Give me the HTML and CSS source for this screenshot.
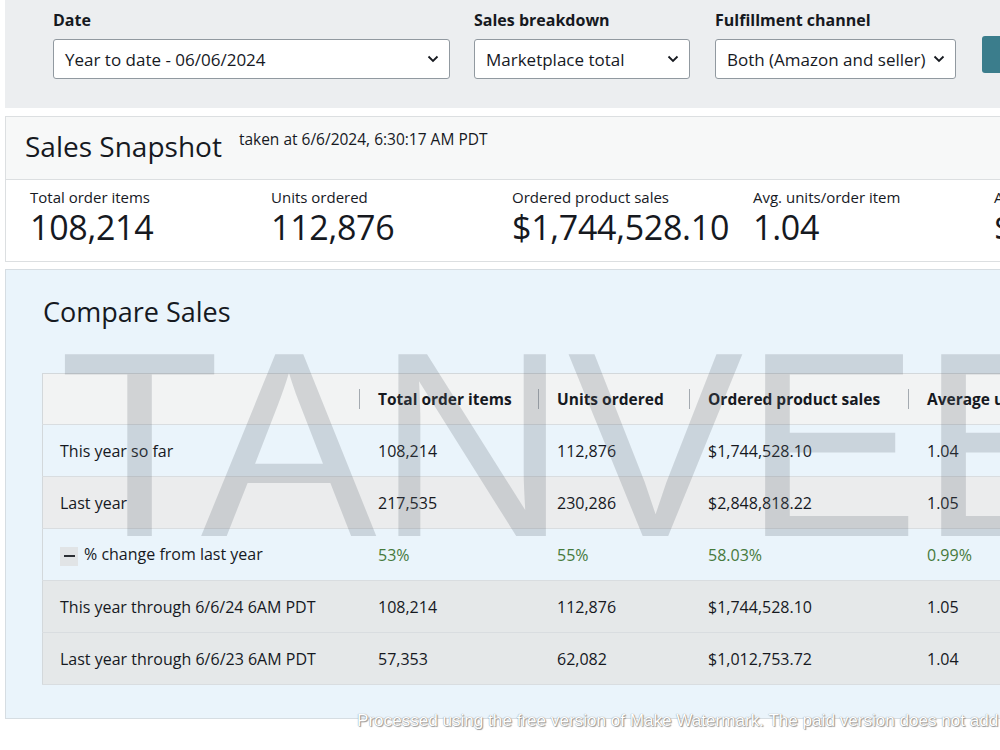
FILE: index.html
```html
<!DOCTYPE html>
<html lang="en">
<head>
    <meta charset="UTF-8">
    <meta name="viewport" content="width=device-width, initial-scale=1.0">
    <title>Sales Dashboard</title>
    <link rel="stylesheet" href="styles.css">
</head>
<body>

    <div class="filters">
        <div class="field field-date">
            <label>Date</label>
            <div class="select">
                <span>Year to date - 06/06/2024</span>
                <svg class="chevron" width="12" height="8" viewBox="0 0 12 8"><path d="M1.5 1.5 6 6l4.5-4.5" fill="none" stroke="#16191f" stroke-width="1.8"/></svg>
            </div>
        </div>
        <div class="field field-breakdown">
            <label>Sales breakdown</label>
            <div class="select">
                <span>Marketplace total</span>
                <svg class="chevron" width="12" height="8" viewBox="0 0 12 8"><path d="M1.5 1.5 6 6l4.5-4.5" fill="none" stroke="#16191f" stroke-width="1.8"/></svg>
            </div>
        </div>
        <div class="field field-channel">
            <label>Fulfillment channel</label>
            <div class="select">
                <span>Both (Amazon and seller)</span>
                <svg class="chevron" width="12" height="8" viewBox="0 0 12 8"><path d="M1.5 1.5 6 6l4.5-4.5" fill="none" stroke="#16191f" stroke-width="1.8"/></svg>
            </div>
        </div>
        <button class="apply"></button>
    </div>

    <div class="snapshot">
        <div class="snapshot-head">
            <h2>Sales Snapshot</h2>
            <span class="taken">taken at 6/6/2024, 6:30:17 AM PDT</span>
        </div>
        <div class="metrics">
            <div class="metric">
                <div class="metric-label">Total order items</div>
                <div class="metric-value">108,214</div>
            </div>
            <div class="metric">
                <div class="metric-label">Units ordered</div>
                <div class="metric-value">112,876</div>
            </div>
            <div class="metric">
                <div class="metric-label">Ordered product sales</div>
                <div class="metric-value">$1,744,528.10</div>
            </div>
            <div class="metric">
                <div class="metric-label">Avg. units/order item</div>
                <div class="metric-value">1.04</div>
            </div>
            <div class="metric">
                <div class="metric-label">Avg. sales/order item</div>
                <div class="metric-value">$16.12</div>
            </div>
        </div>
    </div>

    <div class="compare">
        <h2>Compare Sales</h2>
        <table class="compare-table">
            <thead>
                <tr>
                    <th class="col-name"></th>
                    <th class="col-items">Total order items</th>
                    <th class="col-units">Units ordered</th>
                    <th class="col-sales">Ordered product sales</th>
                    <th class="col-avg">Average units/order item</th>
                </tr>
            </thead>
            <tbody>
                <tr class="row-blue">
                    <td>This year so far</td>
                    <td>108,214</td>
                    <td>112,876</td>
                    <td>$1,744,528.10</td>
                    <td>1.04</td>
                </tr>
                <tr class="row-gray">
                    <td>Last year</td>
                    <td>217,535</td>
                    <td>230,286</td>
                    <td>$2,848,818.22</td>
                    <td>1.05</td>
                </tr>
                <tr class="row-blue change">
                    <td><span class="toggle"></span>% change from last year</td>
                    <td>53%</td>
                    <td>55%</td>
                    <td>58.03%</td>
                    <td>0.99%</td>
                </tr>
                <tr class="row-dark">
                    <td>This year through 6/6/24 6AM PDT</td>
                    <td>108,214</td>
                    <td>112,876</td>
                    <td>$1,744,528.10</td>
                    <td>1.05</td>
                </tr>
                <tr class="row-dark">
                    <td>Last year through 6/6/23 6AM PDT</td>
                    <td>57,353</td>
                    <td>62,082</td>
                    <td>$1,012,753.72</td>
                    <td>1.04</td>
                </tr>
            </tbody>
        </table>
    </div>

    <div class="stamp">TANVEER</div>
    <div class="stamp-note">Processed using the free version of Make Watermark. The paid version does not add watermarks.</div>

</body>
</html>
```

FILE: styles.css
```css
body {
    font-family: "Open Sans", Arial, sans-serif;
    color: #16191f;
    background-color: #fff;
    margin: 0;
    width: 1000px;
    height: 750px;
    overflow: hidden;
    position: relative;
}
h2 {
    margin: 0;
    font-weight: 400;
}

/* filter bar */
.filters {
    display: flex;
    margin-left: 5px;
    height: 108px;
    box-sizing: border-box;
    padding: 10px 0 0 48px;
    background-color: #eceef0;
}
.field {
    display: flex;
    flex-direction: column;
    flex: none;
    margin-right: 24px;
}
.field label {
    font-size: 16px;
    font-weight: 700;
    line-height: 20px;
    margin-bottom: 9px;
}
.field-date { width: 397px; }
.field-breakdown { width: 216px; margin-right: 25px; }
.field-channel { width: 241px; margin-right: 26px; }
.select {
    display: flex;
    align-items: center;
    justify-content: space-between;
    height: 40px;
    box-sizing: border-box;
    padding: 0 10px 0 11px;
    background-color: #fff;
    border: 1px solid #9199a0;
    border-radius: 3px;
    font-size: 17px;
    white-space: nowrap;
}
.chevron {
    flex: none;
}
.apply {
    flex: none;
    margin-top: 26px;
    width: 60px;
    height: 37px;
    border: none;
    border-radius: 3px;
    background-color: #3b7d8c;
}

/* sales snapshot */
.snapshot {
    margin: 8px 0 0 5px;
    width: 1100px;
    border: 1px solid #dcdfe1;
}
.snapshot-head {
    display: flex;
    align-items: flex-start;
    height: 63px;
    box-sizing: border-box;
    padding: 11px 19px 0;
    background-color: #f7f8f8;
    border-bottom: 1px solid #dcdfe1;
}
.snapshot-head h2 {
    font-size: 28px;
    line-height: 36px;
}
.taken {
    font-size: 15.5px;
    line-height: 20px;
    margin: 1px 0 0 17px;
}
.metrics {
    display: grid;
    grid-template-columns: repeat(5, 241px);
    padding: 7px 0 14px 24px;
}
.metric-label {
    font-size: 15px;
    line-height: 20px;
}
.metric-value {
    font-size: 34px;
    line-height: 40px;
    letter-spacing: -0.3px;
}

/* compare sales */
.compare {
    margin: 7px 0 0 5px;
    width: 1100px;
    height: 450px;
    box-sizing: border-box;
    padding: 24px 0 0 36px;
    background-color: #eaf4fb;
    border: 1px solid #d6dde2;
}
.compare h2 {
    font-size: 27px;
    line-height: 36px;
    margin-left: 1px;
    margin-bottom: 43px;
}
.compare-table {
    width: 1060px;
    border-collapse: collapse;
    border: 1px solid #d3d8db;
    font-size: 16px;
    table-layout: fixed;
}
.compare-table th {
    height: 50px;
    padding: 0 0 0 19px;
    text-align: left;
    font-weight: 700;
    font-size: 15.5px;
    background-color: #f2f3f3;
    border-bottom: 1px solid #d9dde0;
    background-image: linear-gradient(#a4aab0, #a4aab0);
    background-repeat: no-repeat;
    background-position: left center;
    background-size: 1px 20px;
    white-space: nowrap;
    overflow: hidden;
}
.compare-table th.col-name {
    background-image: none;
}
.col-name { width: 297px; }
.col-items { width: 160px; }
.col-units { width: 132px; }
.col-sales { width: 200px; }
.compare-table td {
    height: 51px;
    padding: 0 0 0 19px;
    border-bottom: 1px solid #d9dde0;
    white-space: nowrap;
}
.compare-table td:first-child {
    padding-left: 17px;
}
.row-blue { background-color: #eaf4fb; }
.row-gray { background-color: #ebeced; }
.row-dark { background-color: #e5e8e9; }
.change td { color: #467a3c; }
.change td:first-child { color: #16191f; }
.toggle {
    display: inline-block;
    width: 18px;
    height: 19px;
    margin-right: 6px;
    vertical-align: middle;
    background-color: #e1e4e6;
    background-image: linear-gradient(#2a2e33, #2a2e33);
    background-repeat: no-repeat;
    background-position: center;
    background-size: 11px 2px;
}

/* watermarks laid over the page */
.stamp {
    position: absolute;
    left: 59px;
    top: 313px;
    font-family: "Liberation Sans", Arial, sans-serif;
    font-size: 264px;
    line-height: 264px;
    color: rgba(90, 100, 110, 0.22);
    white-space: nowrap;
    pointer-events: none;
}
.stamp-note {
    position: absolute;
    left: 357px;
    top: 711px;
    font-family: "Liberation Sans", Arial, sans-serif;
    font-size: 17.1px;
    line-height: 20px;
    color: #fff;
    text-shadow: 0 0 1px #777, 1px 1px 1px #999;
    white-space: nowrap;
    pointer-events: none;
}
```
